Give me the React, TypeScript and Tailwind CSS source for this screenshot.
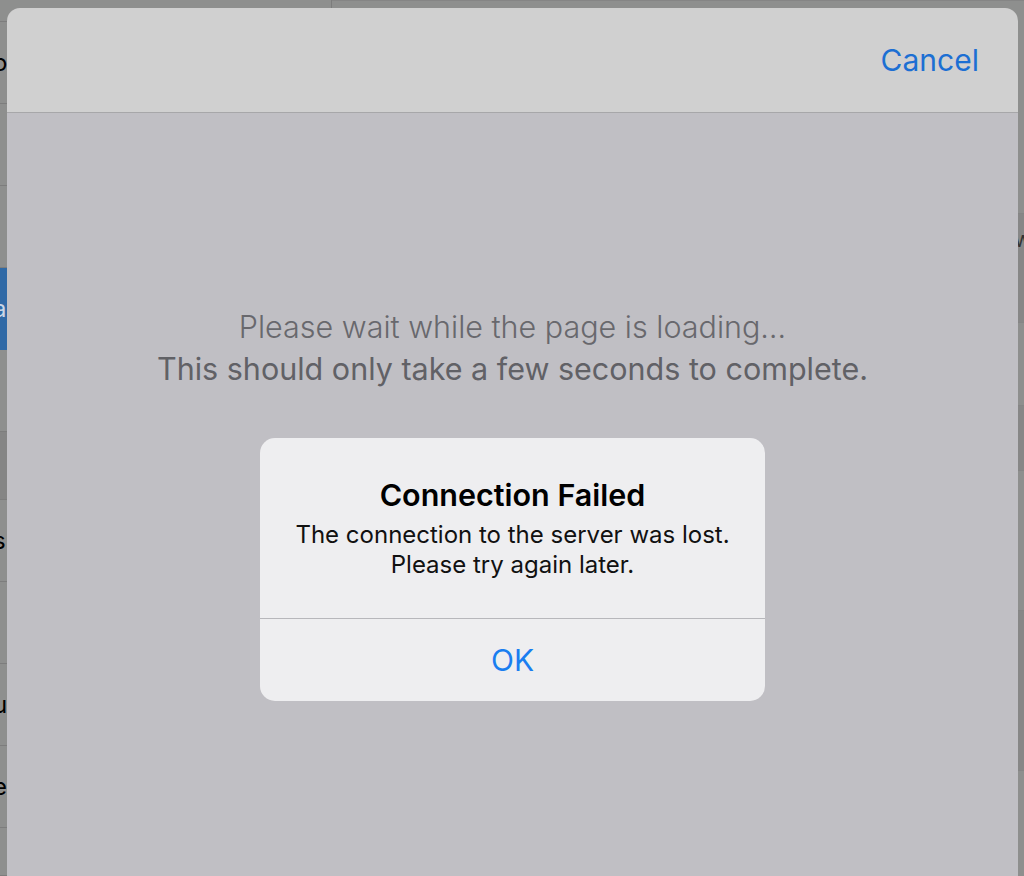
const leftRows = [
  { h: 22, text: "" },
  { h: 82, text: "o" },
  { h: 82, text: "" },
  { h: 82, text: "" },
  { h: 82, text: "a", selected: true },
  { h: 82, text: "" },
  { h: 68, text: "", dark: true },
  { h: 82, text: "s" },
  { h: 82, text: "" },
  { h: 82, text: "u" },
  { h: 82, text: "e" },
  { h: 48, text: "" },
];

const rightRows = [
  { h: 213, text: "" },
  { h: 109, text: "w", dark: true },
  { h: 83, text: "" },
  { h: 65, text: "", dark: true },
  { h: 140, text: "" },
  { h: 160, text: "", dark: true },
  { h: 106, text: "" },
];

function BackgroundPage() {
  return (
    <div className="flex h-full w-full">
      {/* Master list */}
      <div className="flex w-[332px] flex-col border-r border-[#7c7c7c]">
        {leftRows.map((row, i) => (
          <div
            key={i}
            style={{ height: row.h }}
            className={
              row.selected
                ? "flex shrink-0 items-center bg-[#2f69a6] text-[24px] text-[#c9d6e6]"
                : row.dark
                  ? "flex shrink-0 items-center border-b border-[#7d7d7d] bg-[#858585] text-[24px] text-black"
                  : "flex shrink-0 items-center border-b border-[#7d7d7d] text-[24px] text-black"
            }
          >
            <span className="ml-[-7px]">{row.text}</span>
          </div>
        ))}
      </div>
      {/* Detail */}
      <div className="flex flex-1 flex-col">
        {rightRows.map((row, i) => (
          <div
            key={i}
            style={{ height: row.h }}
            className={
              row.dark
                ? "flex shrink-0 items-start justify-end border-t border-[#858585] bg-[#878787] pt-[14px] text-[22px] leading-none text-[#333]"
                : "flex shrink-0 items-start justify-end border-t border-[#858585] text-[22px] text-[#333]"
            }
          >
            <span className="mr-[-8px]">{row.text}</span>
          </div>
        ))}
      </div>
    </div>
  );
}

export default function App() {
  return (
    <div className="relative h-[876px] w-[1024px] overflow-hidden bg-[#8e8f8e] font-['Inter','Liberation_Sans',sans-serif]">
      <BackgroundPage />

      {/* Sheet */}
      <div className="absolute bottom-0 left-[7px] right-[6px] top-[8px] flex flex-col overflow-hidden rounded-t-[13px]">
        <div className="flex h-[105px] shrink-0 items-center justify-end border-b border-[#a7a7a9] bg-[#d0d0d0] pr-[39px]">
          <span className="text-[30px] text-[#1c6fd3]">Cancel</span>
        </div>
        <div className="flex flex-1 flex-col items-center bg-[#c0bfc4] pt-[193px] text-center">
          <p className="text-[30.5px] leading-[42px] font-light text-[#68686d]">
            Please wait while the page is loading…
          </p>
          <p className="text-[30.5px] leading-[42px] text-[#616166]">
            This should only take a few seconds to complete.
          </p>
        </div>
      </div>

      {/* Alert */}
      <div className="absolute left-[260px] top-[438px] flex w-[505px] flex-col overflow-hidden rounded-[15px] bg-[#eeeef0]">
        <div className="flex flex-col items-center border-b border-[#b7b7bb] px-4 pb-[38px] pt-[40px] text-center">
          <h2 className="text-[30.5px] leading-[34px] font-semibold text-black">
            Connection Failed
          </h2>
          <p className="mt-[8px] text-[24px] leading-[30px] text-[#111]">
            The connection to the server was lost.
            <br />
            Please try again later.
          </p>
        </div>
        <button className="flex h-[82px] items-center justify-center text-[30px] text-[#1a7ef0]">
          OK
        </button>
      </div>
    </div>
  );
}
